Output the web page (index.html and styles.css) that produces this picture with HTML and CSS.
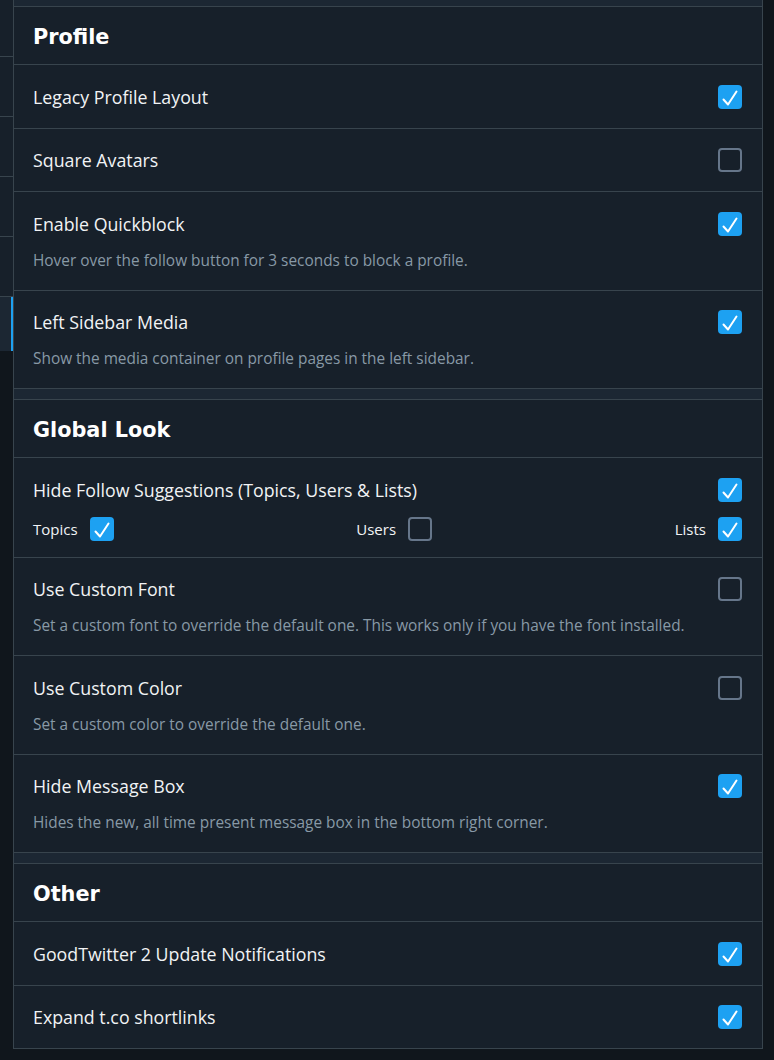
FILE: index.html
```html
<!DOCTYPE html>
<html lang="en">
<head>
<meta charset="utf-8">
<title>Settings</title>
<link rel="stylesheet" href="styles.css">
</head>
<body>
<div class="page">
  <aside class="nav">
    <div class="nav-item first"></div>
    <div class="nav-item"></div>
    <div class="nav-item"></div>
    <div class="nav-item"></div>
    <div class="nav-item"></div>
    <div class="nav-item active"></div>
  </aside>

  <main class="panel">
    <section class="group">
      <h2 class="group-title">Profile</h2>
      <div class="row">
        <div class="row-main"><span class="row-title">Legacy Profile Layout</span><span class="cb on"><svg viewBox="0 0 24 24"><polyline points="5.5,14.5 10,19.5 18.5,6.5"/></svg></span></div>
      </div>
      <div class="row">
        <div class="row-main"><span class="row-title">Square Avatars</span><span class="cb"></span></div>
      </div>
      <div class="row">
        <div class="row-main"><span class="row-title">Enable Quickblock</span><span class="cb on"><svg viewBox="0 0 24 24"><polyline points="5.5,14.5 10,19.5 18.5,6.5"/></svg></span></div>
        <p class="row-desc">Hover over the follow button for 3 seconds to block a profile.</p>
      </div>
      <div class="row">
        <div class="row-main"><span class="row-title">Left Sidebar Media</span><span class="cb on"><svg viewBox="0 0 24 24"><polyline points="5.5,14.5 10,19.5 18.5,6.5"/></svg></span></div>
        <p class="row-desc">Show the media container on profile pages in the left sidebar.</p>
      </div>
    </section>

    <section class="group">
      <h2 class="group-title">Global Look</h2>
      <div class="row">
        <div class="row-main"><span class="row-title">Hide Follow Suggestions (Topics, Users &amp; Lists)</span><span class="cb on"><svg viewBox="0 0 24 24"><polyline points="5.5,14.5 10,19.5 18.5,6.5"/></svg></span></div>
        <div class="sub-row">
          <label class="sub-opt">Topics<span class="cb on"><svg viewBox="0 0 24 24"><polyline points="5.5,14.5 10,19.5 18.5,6.5"/></svg></span></label>
          <label class="sub-opt">Users<span class="cb"></span></label>
          <label class="sub-opt">Lists<span class="cb on"><svg viewBox="0 0 24 24"><polyline points="5.5,14.5 10,19.5 18.5,6.5"/></svg></span></label>
        </div>
      </div>
      <div class="row">
        <div class="row-main"><span class="row-title">Use Custom Font</span><span class="cb"></span></div>
        <p class="row-desc">Set a custom font to override the default one. This works only if you have the font installed.</p>
      </div>
      <div class="row">
        <div class="row-main"><span class="row-title">Use Custom Color</span><span class="cb"></span></div>
        <p class="row-desc">Set a custom color to override the default one.</p>
      </div>
      <div class="row">
        <div class="row-main"><span class="row-title">Hide Message Box</span><span class="cb on"><svg viewBox="0 0 24 24"><polyline points="5.5,14.5 10,19.5 18.5,6.5"/></svg></span></div>
        <p class="row-desc">Hides the new, all time present message box in the bottom right corner.</p>
      </div>
    </section>

    <section class="group">
      <h2 class="group-title">Other</h2>
      <div class="row">
        <div class="row-main"><span class="row-title">GoodTwitter 2 Update Notifications</span><span class="cb on"><svg viewBox="0 0 24 24"><polyline points="5.5,14.5 10,19.5 18.5,6.5"/></svg></span></div>
      </div>
      <div class="row">
        <div class="row-main"><span class="row-title">Expand t.co shortlinks</span><span class="cb on"><svg viewBox="0 0 24 24"><polyline points="5.5,14.5 10,19.5 18.5,6.5"/></svg></span></div>
      </div>
    </section>
  </main>

  <div class="rail"></div>
</div>
</body>
</html>
```

FILE: styles.css
```css
* { box-sizing: border-box; }

html, body {
  margin: 0;
  padding: 0;
  background: #10161c;
  height: 100%;
}

body {
  font-family: "Open Sans", "Noto Sans", "Liberation Sans", sans-serif;
  color: #f1f3f5;
}

.page {
  display: flex;
  align-items: flex-start;
  width: 774px;
  height: 1060px;
  overflow: hidden;
}

/* left nav remnants */
.nav {
  width: 13px;
  flex: none;
  display: flex;
  flex-direction: column;
}

.nav-item {
  height: 60px;
  background: #17202a;
  border-bottom: 1px solid #38444d;
}

.nav-item.first {
  height: 57px;
}

.nav-item.active {
  height: 54px;
  border-bottom: none;
  background: #1c2733;
  border-right: 2px solid #1da1f2;
}

/* settings panel */
.panel {
  width: 750px;
  flex: none;
  background: #1c2733;
  border-left: 1px solid #38444d;
  border-right: 1px solid #38444d;
  padding-top: 6px;
  display: flex;
  flex-direction: column;
  gap: 10px;
}

.group {
  background: #17202a;
  border-top: 1px solid #38444d;
  border-bottom: 1px solid #38444d;
}

.group-title {
  margin: 0;
  padding: 16px 19px 12px;
  height: 58px;
  line-height: 29px;
  font-family: "DejaVu Sans", "Liberation Sans", sans-serif;
  font-weight: bold;
  font-size: 20.8px;
  color: #ffffff;
  border-bottom: 1px solid #38444d;
}

.row {
  padding: 16.5px 20px 16px 19px;
  border-bottom: 1px solid #38444d;
}

.row:last-child {
  border-bottom: none;
}

.row-main {
  display: flex;
  align-items: center;
  justify-content: space-between;
  height: 30px;
}

.row-title {
  font-size: 17.8px;
  line-height: 30px;
  color: #f1f3f5;
}

.row-desc {
  margin: 10px 0 1px;
  font-size: 15.4px;
  line-height: 24px;
  color: #8899a6;
}

.sub-row {
  margin-top: 12px;
  display: flex;
  justify-content: space-between;
  align-items: center;
  height: 24px;
}

.sub-opt {
  display: flex;
  align-items: center;
  gap: 12px;
  font-size: 15px;
  color: #f1f3f5;
}

/* checkboxes */
.cb {
  width: 24px;
  height: 24px;
  flex: none;
  border-radius: 4px;
  border: 2px solid #66768a;
  display: flex;
  align-items: center;
  justify-content: center;
}

.cb.on {
  background: #1da1f2;
  border: none;
}

.cb svg {
  width: 24px;
  height: 24px;
  fill: none;
  stroke: #ffffff;
  stroke-width: 2;
  stroke-linecap: round;
  stroke-linejoin: round;
}

.rail {
  flex: 1;
}
```
